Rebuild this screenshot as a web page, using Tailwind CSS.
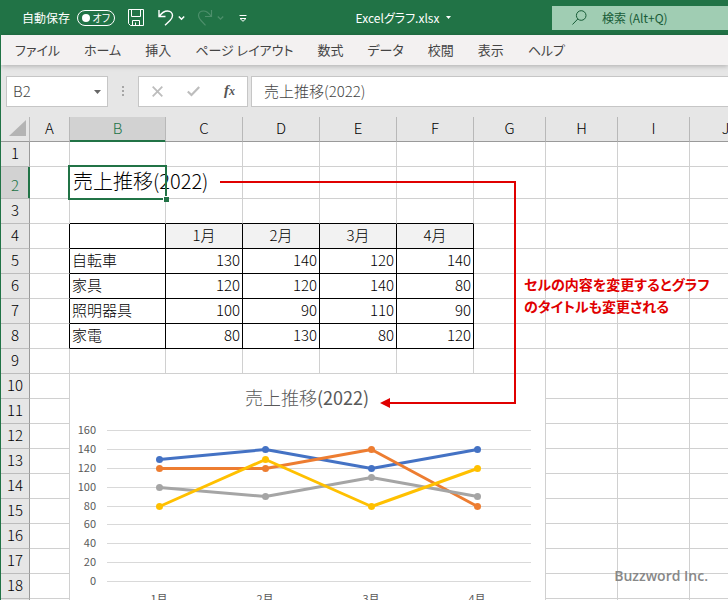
<!DOCTYPE html>
<html lang="ja">
<head>
    <meta charset="UTF-8">
    <meta name="viewport" content="width=device-width, initial-scale=1.0">
    <title>Excelグラフ.xlsx</title>
    <script src="https://cdn.jsdelivr.net/npm/@tailwindcss/browser@4"></script>
</head>
<body class="h-screen overflow-hidden flex flex-col border-l border-[#217346] bg-[#e6e6e6] font-['Noto_Sans_CJK_JP',sans-serif] text-black">

    <!-- Title bar -->
    <header class="flex items-center shrink-0 h-[35px] bg-[#217346] text-white text-xs whitespace-nowrap">
        <div class="flex items-center pl-[21px]">
            <label for="autosave">自動保存</label>
            <label for="autosave" class="flex items-center justify-between w-[38px] h-4 ml-[7px] pl-1 pr-1 border border-white rounded-full text-[10px] [font-feature-settings:'palt']">
                <input id="autosave" type="checkbox" class="appearance-none size-2 rounded-full bg-white">
                オフ
            </label>
            <button type="button" aria-label="上書き保存" class="ml-[13px]">
                <svg class="w-4 h-[17px]" viewBox="0 0 16 17" fill="none" stroke="currentColor">
                    <path d="M.5 .5h15v16h-13l-2-2zM3.500 .5v7h9v-7M4.500 16.500v-5h7v5M7.500 16v-2.500" />
                </svg>
            </button>
            <button type="button" aria-label="元に戻す" class="flex items-center ml-3.5">
                <svg class="w-4 h-[17px]" viewBox="0 0 16 17" fill="none" stroke="currentColor" stroke-width="1.4">
                    <path d="M1 1v6.500h6.500M1.500 7C4 3.500 7 2 9.500 2c3 0 5 2 5 4.500 0 2-1 3.500-2.500 5L7 16.300" />
                </svg>
                <svg class="ml-1 w-[7px] h-1.5" viewBox="0 0 7 6" fill="none" stroke="currentColor" stroke-width="1.5">
                    <path d="M.8 1.500l2.700 2.700 2.700-2.700" />
                </svg>
            </button>
            <button type="button" aria-label="やり直し" disabled class="flex items-center ml-3 text-[#4d8f6b]">
                <svg class="w-4 h-[17px]" viewBox="0 0 16 17" fill="none" stroke="currentColor" stroke-width="1.2">
                    <path d="M14.500 1v6.500H8M14 7C11.500 3.500 9 2 6.500 2c-3 0-5 2-5 4.500 0 2 1 3.500 2.500 5l4.500 4.800" />
                </svg>
                <svg class="ml-1 w-[7px] h-1.5" viewBox="0 0 7 6" fill="none" stroke="currentColor" stroke-width="1.3">
                    <path d="M.8 1.500l2.700 2.700 2.700-2.700" />
                </svg>
            </button>
            <button type="button" aria-label="クイック アクセス ツール バーのカスタマイズ" class="ml-[15px]">
                <svg class="w-2 h-2" viewBox="0 0 8 8" fill="none" stroke="currentColor">
                    <path d="M.5 1.500h7M1 4.500h6L4 7.300z" />
                </svg>
            </button>
        </div>

        <button type="button" class="flex flex-1 items-center justify-center gap-[7px] pl-2">
            <span class="[font-feature-settings:'palt']">Excelグラフ.xlsx</span>
            <svg class="w-[5px] h-[3px]" viewBox="0 0 5 3" fill="currentColor"><path d="M0 0h5L2.500 3z" /></svg>
        </button>

        <label for="search" class="flex items-center shrink-0 w-44 h-6 pl-5 bg-[#a0cdb3] text-[#185c37]">
            <svg class="size-[15px]" viewBox="0 0 15 15" fill="none" stroke="currentColor">
                <circle cx="9.200" cy="5.500" r="4.800" />
                <path d="M5.800 9L.5 14.500" />
            </svg>
            <input id="search" type="text" placeholder="検索 (Alt+Q)" class="min-w-0 flex-1 ml-[15px] bg-transparent outline-none placeholder:text-[#185c37]">
        </label>
    </header>

    <!-- Ribbon tabs -->
    <nav class="relative flex items-center shrink-0 gap-6 h-[30px] pl-3.5 bg-[#f3f1f1] text-[13px] text-[#444] whitespace-nowrap shadow-[0_1px_5px_rgba(0,0,0,0.25)] [font-feature-settings:'palt']">
        <button type="button">ファイル</button>
        <button type="button">ホーム</button>
        <button type="button">挿入</button>
        <button type="button">ページ レイアウト</button>
        <button type="button">数式</button>
        <button type="button">データ</button>
        <button type="button">校閲</button>
        <button type="button">表示</button>
        <button type="button">ヘルプ</button>
    </nav>

    <!-- Name box and formula bar -->
    <div class="flex shrink-0 pt-[11px] pb-2.5 pl-[5px] text-[15px] text-[#444]">
        <div class="flex items-center w-[102px] h-[31px] pl-1.5 pr-1.5 border border-[#c6c6c6] bg-white">
            <input type="text" value="B2" aria-label="名前ボックス" class="min-w-0 flex-1 font-light outline-none">
            <button type="button" aria-label="名前の一覧">
                <svg class="w-[7px] h-1" viewBox="0 0 7 4" fill="#666"><path d="M0 0h7L3.500 4z" /></svg>
            </button>
        </div>
        <svg class="w-[30px] h-[31px]" viewBox="0 0 30 31" fill="#a6a6a6">
            <path d="M14 10h2v2h-2zM14 14h2v2h-2zM14 18h2v2h-2z" />
        </svg>
        <div class="flex items-center w-[110px] h-[31px] pl-[13px] border border-[#c6c6c6] bg-white">
            <button type="button" aria-label="キャンセル">
                <svg class="size-[11px]" viewBox="0 0 11 11" fill="none" stroke="#bdbdbd" stroke-width="1.800"><path d="M.7 .7l9.600 9.600M10.300 .7L.7 10.300" /></svg>
            </button>
            <button type="button" aria-label="入力" class="ml-6">
                <svg class="w-[13px] h-[11px]" viewBox="0 0 13 11" fill="none" stroke="#bdbdbd" stroke-width="2.200"><path d="M.8 5.500L4.500 9 12.200 1" /></svg>
            </button>
            <button type="button" class="ml-6 pb-0.5 font-['Liberation_Serif',serif] italic font-bold text-[15px] text-[#555]">f<span class="text-xs">x</span></button>
        </div>
        <input type="text" value="売上推移(2022)" aria-label="数式バー" class="min-w-0 flex-1 h-[31px] ml-[3px] pl-3 pb-0.5 border border-r-0 border-[#c6c6c6] bg-white font-light outline-none">
    </div>

    <!-- Worksheet -->
    <main class="relative flex-1 min-h-0 overflow-hidden bg-white">
        <table class="table-fixed w-[761px] border-separate border-spacing-0 text-[15px] leading-5 font-light
                      [&_th]:p-0 [&_th]:pb-0.5 [&_th]:font-light [&_th]:text-center
                      [&_td]:border-r [&_td]:border-b [&_td]:border-[#d0d0d0] [&_td]:pt-0 [&_td]:pb-0.5 [&_td]:px-0.5
                      [&_tbody_tr]:h-[25px] [&_tbody_th]:border-r [&_tbody_th]:border-b [&_tbody_th]:border-r-[#9a9a9a] [&_tbody_th]:border-b-[#bcbcbc] [&_tbody_th]:bg-[#e6e6e6]">
            <colgroup>
                <col class="w-[29px]">
                <col class="w-10">
                <col class="w-24">
                <col class="w-[77px]" span="4">
                <col class="w-[72px]" span="4">
            </colgroup>
            <thead>
                <tr class="h-[25px] bg-[#e6e6e6] [&_th]:border-r [&_th]:border-b [&_th]:border-r-[#b8b8b8] [&_th]:border-b-[#9a9a9a]">
                    <th scope="col" aria-label="すべて選択">
                        <svg class="w-[17px] h-4 ml-2" viewBox="0 0 17 16" fill="#b4b4b4"><path d="M17 0v16H0z" /></svg>
                    </th>
                    <th scope="col">A</th>
                    <th scope="col" class="bg-[#d2d2d2] text-[#217346] shadow-[inset_0_-1px_0_#217346] border-b-[#217346]!">B</th>
                    <th scope="col">C</th>
                    <th scope="col">D</th>
                    <th scope="col">E</th>
                    <th scope="col">F</th>
                    <th scope="col">G</th>
                    <th scope="col">H</th>
                    <th scope="col">I</th>
                    <th scope="col">J</th>
                </tr>
            </thead>
            <tbody>
                <tr>
                    <th scope="row">1</th>
                    <td></td><td></td><td></td><td></td><td></td><td></td><td></td><td></td><td></td><td></td>
                </tr>
                <tr class="h-8!">
                    <th scope="row" class="bg-[#d2d2d2]! pt-1.5! text-[#217346] shadow-[inset_-1px_0_0_#217346] border-r-[#217346]!">2</th>
                    <td></td>
                    <td class="relative pb-1! pl-[3px]! whitespace-nowrap text-xl leading-6">
                        売上推移(2022)
                        <!-- Active cell frame and fill handle -->
                        <span class="absolute -inset-0.5 border-2 border-[#217346]"></span>
                        <span class="absolute -right-1 -bottom-1 size-1.5 border-t border-l border-white bg-[#217346]"></span>
                    </td>
                    <td></td><td></td><td></td><td></td><td></td><td></td><td></td><td></td>
                </tr>
                <tr class="[&_td:nth-child(n+3):nth-child(-n+7)]:border-b-black">
                    <th scope="row">3</th>
                    <td></td><td></td><td></td><td></td><td></td><td></td><td></td><td></td><td></td><td></td>
                </tr>
                <tr class="text-center [&_td:nth-child(-n+7)]:border-r-black [&_td:nth-child(n+3):nth-child(-n+7)]:border-b-black [&_td:nth-child(n+4):nth-child(-n+7)]:bg-[#f2f2f2]">
                    <th scope="row">4</th>
                    <td></td><td></td><td>1月</td><td>2月</td><td>3月</td><td>4月</td><td></td><td></td><td></td><td></td>
                </tr>
                <tr class="text-right [&_td:nth-child(-n+7)]:border-r-black [&_td:nth-child(n+3):nth-child(-n+7)]:border-b-black">
                    <th scope="row">5</th>
                    <td></td><td class="text-left">自転車</td><td>130</td><td>140</td><td>120</td><td>140</td><td></td><td></td><td></td><td></td>
                </tr>
                <tr class="text-right [&_td:nth-child(-n+7)]:border-r-black [&_td:nth-child(n+3):nth-child(-n+7)]:border-b-black">
                    <th scope="row">6</th>
                    <td></td><td class="text-left">家具</td><td>120</td><td>120</td><td>140</td><td>80</td><td></td><td></td><td></td><td></td>
                </tr>
                <tr class="text-right [&_td:nth-child(-n+7)]:border-r-black [&_td:nth-child(n+3):nth-child(-n+7)]:border-b-black">
                    <th scope="row">7</th>
                    <td></td><td class="text-left">照明器具</td><td>100</td><td>90</td><td>110</td><td>90</td><td></td><td></td><td></td><td></td>
                </tr>
                <tr class="text-right [&_td:nth-child(-n+7)]:border-r-black [&_td:nth-child(n+3):nth-child(-n+7)]:border-b-black">
                    <th scope="row">8</th>
                    <td></td><td class="text-left">家電</td><td>80</td><td>130</td><td>80</td><td>120</td><td></td><td></td><td></td><td></td>
                </tr>
                <tr>
                    <th scope="row">9</th>
                    <td></td><td></td><td></td><td></td><td></td><td></td><td></td><td></td><td></td><td></td>
                </tr>
                <tr>
                    <th scope="row">10</th>
                    <td></td>
                    <!-- Line chart, spans B10:G19 -->
                    <td colspan="6" rowspan="10" class="p-0! align-top">
                        <svg class="block w-[475px] h-[240px]" viewBox="0 0 475 240" fill="none">
                            <text x="237" y="31" font-size="18" text-anchor="middle" fill="#595959">売上推移<tspan font-weight="400">(2022)</tspan></text>
                            <path stroke="#d9d9d9" d="M37 56.500h424M37 75.500h424M37 94.500h424M37 113.500h424M37 132.500h424M37 150.500h424M37 169.500h424M37 188.500h424M37 207.500h424" />
                            <g font-size="11" font-weight="400" text-anchor="end" fill="#595959">
                                <text x="26" y="60">160</text>
                                <text x="26" y="79">140</text>
                                <text x="26" y="98">120</text>
                                <text x="26" y="117">100</text>
                                <text x="26" y="136">80</text>
                                <text x="26" y="154">60</text>
                                <text x="26" y="173">40</text>
                                <text x="26" y="192">20</text>
                                <text x="26" y="211">0</text>
                            </g>
                            <g font-size="11" font-weight="400" text-anchor="middle" fill="#595959">
                                <text x="89" y="229">1月</text>
                                <text x="195" y="229">2月</text>
                                <text x="301" y="229">3月</text>
                                <text x="407" y="229">4月</text>
                            </g>
                            <g stroke-width="3" stroke-linejoin="round">
                                <path stroke="#4472c4" d="M89.500 85.500L195.500 75.500L301.500 94.500L407.500 75.500" />
                                <g fill="#4472c4" stroke="none"><circle cx="89.500" cy="85.500" r="3.500" /><circle cx="195.500" cy="75.500" r="3.500" /><circle cx="301.500" cy="94.500" r="3.500" /><circle cx="407.500" cy="75.500" r="3.500" /></g>
                                <path stroke="#ed7d31" d="M89.500 94.500L195.500 94.500L301.500 75.500L407.500 132.500" />
                                <g fill="#ed7d31" stroke="none"><circle cx="89.500" cy="94.500" r="3.500" /><circle cx="195.500" cy="94.500" r="3.500" /><circle cx="301.500" cy="75.500" r="3.500" /><circle cx="407.500" cy="132.500" r="3.500" /></g>
                                <path stroke="#a5a5a5" d="M89.500 113.500L195.500 122.500L301.500 103.500L407.500 122.500" />
                                <g fill="#a5a5a5" stroke="none"><circle cx="89.500" cy="113.500" r="3.500" /><circle cx="195.500" cy="122.500" r="3.500" /><circle cx="301.500" cy="103.500" r="3.500" /><circle cx="407.500" cy="122.500" r="3.500" /></g>
                                <path stroke="#ffc000" d="M89.500 132.500L195.500 85.500L301.500 132.500L407.500 94.500" />
                                <g fill="#ffc000" stroke="none"><circle cx="89.500" cy="132.500" r="3.500" /><circle cx="195.500" cy="85.500" r="3.500" /><circle cx="301.500" cy="132.500" r="3.500" /><circle cx="407.500" cy="94.500" r="3.500" /></g>
                            </g>
                        </svg>
                    </td>
                    <td></td><td></td><td></td>
                </tr>
                <tr><th scope="row">11</th><td></td><td></td><td></td><td></td></tr>
                <tr><th scope="row">12</th><td></td><td></td><td></td><td></td></tr>
                <tr><th scope="row">13</th><td></td><td></td><td></td><td></td></tr>
                <tr><th scope="row">14</th><td></td><td></td><td></td><td></td></tr>
                <tr><th scope="row">15</th><td></td><td></td><td></td><td></td></tr>
                <tr><th scope="row">16</th><td></td><td></td><td></td><td></td></tr>
                <tr><th scope="row">17</th><td></td><td></td><td></td><td></td></tr>
                <tr><th scope="row">18</th><td></td><td></td><td></td><td></td></tr>
                <tr><th scope="row"></th><td></td><td></td><td></td><td></td></tr>
            </tbody>
        </table>

        <!-- Arrow from the cell to the chart title -->
        <svg class="absolute top-[62px] left-[219px] w-[297px] h-[232px] pointer-events-none" viewBox="0 0 297 232" fill="none">
            <path stroke="#e00000" stroke-width="2" d="M0 3h295v221H168" />
            <path fill="#e00000" d="M160 224l10-5v10z" />
        </svg>
        <p class="absolute top-[156px] left-[523px] text-sm leading-[22px] font-bold text-[#e00000] whitespace-nowrap [font-feature-settings:'palt']">
            セルの内容を変更するとグラフ<br>のタイトルも変更される
        </p>
        <p class="absolute right-5 bottom-3.5 font-['Open_Sans',sans-serif] text-sm font-semibold text-[#888]">Buzzword Inc.</p>
    </main>
</body>
</html>
